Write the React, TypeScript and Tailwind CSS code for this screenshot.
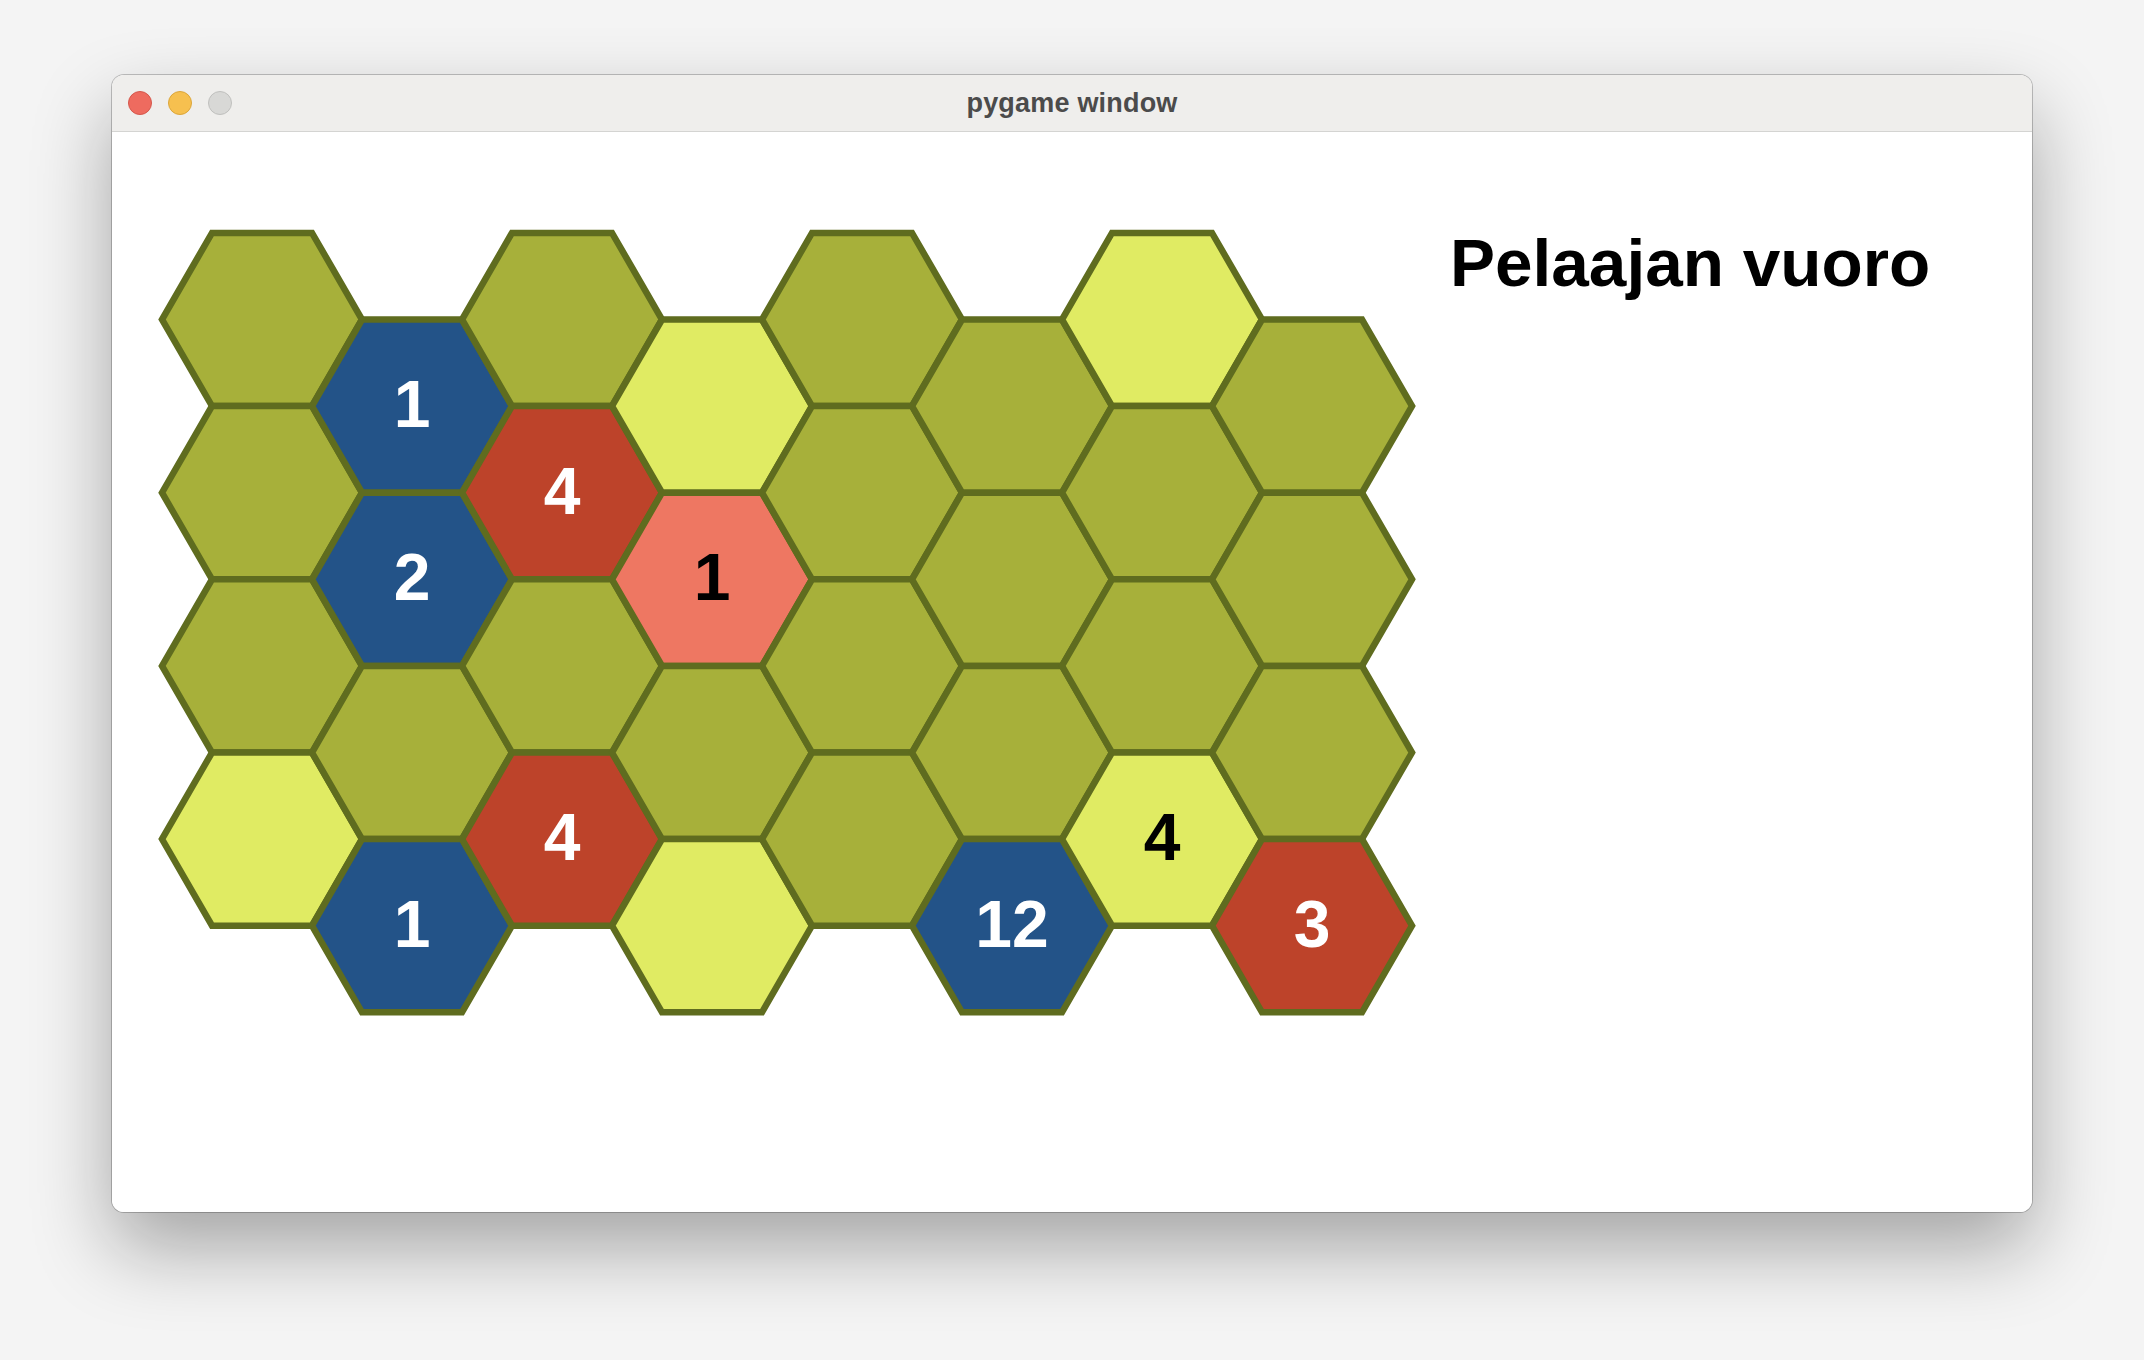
import React from "react";

const OLIVE = "#a7b03a";
const LIGHT = "#e0eb63";
const BLUE = "#235388";
const RED = "#bd432a";
const SALMON = "#ee7762";
const EDGE = "#5f6c1f";

type Cell = { fill: string; label?: string; dark?: boolean };

// board[col][row], odd columns are shifted down by half a hex
const board: Cell[][] = [
  [{ fill: OLIVE }, { fill: OLIVE }, { fill: OLIVE }, { fill: LIGHT }],
  [{ fill: BLUE, label: "1" }, { fill: BLUE, label: "2" }, { fill: OLIVE }, { fill: BLUE, label: "1" }],
  [{ fill: OLIVE }, { fill: RED, label: "4" }, { fill: OLIVE }, { fill: RED, label: "4" }],
  [{ fill: LIGHT }, { fill: SALMON, label: "1", dark: true }, { fill: OLIVE }, { fill: LIGHT }],
  [{ fill: OLIVE }, { fill: OLIVE }, { fill: OLIVE }, { fill: OLIVE }],
  [{ fill: OLIVE }, { fill: OLIVE }, { fill: OLIVE }, { fill: BLUE, label: "12" }],
  [{ fill: LIGHT }, { fill: OLIVE }, { fill: OLIVE }, { fill: LIGHT, label: "4", dark: true }],
  [{ fill: OLIVE }, { fill: OLIVE }, { fill: OLIVE }, { fill: RED, label: "3" }],
];

const R = 100;
const H = Math.sqrt(3) * R;

function hexPoints(cx: number, cy: number) {
  const pts: string[] = [];
  for (let i = 0; i < 6; i++) {
    const a = (Math.PI / 3) * i;
    pts.push(`${(cx + R * Math.cos(a)).toFixed(2)},${(cy + R * Math.sin(a)).toFixed(2)}`);
  }
  return pts.join(" ");
}

const Board = () => {
  const FS = 66;
  return (
    <svg width={1338} height={1080} viewBox="0 0 1338 1080" className="shrink-0">
      {board.map((col, c) =>
        col.map((cell, r) => {
          const cx = 150 + 150 * c;
          const cy = 187.5 + H * r + (c % 2 ? H / 2 : 0);
          return (
            <g key={`${c}-${r}`}>
              <polygon points={hexPoints(cx, cy)} fill={cell.fill} stroke={EDGE} strokeWidth={6.5} />
              {cell.label && (
                <text
                  x={cx}
                  y={cy + 0.358 * FS - 2.5}
                  textAnchor="middle"
                  fontFamily="'Liberation Sans', Arial, sans-serif"
                  fontWeight={700}
                  fontSize={FS}
                  fill={cell.dark ? "#000000" : "#ffffff"}
                >
                  {cell.label}
                </text>
              )}
            </g>
          );
        })
      )}
    </svg>
  );
};

export default function App() {
  return (
    <div className="w-[2144px] h-[1360px] bg-[#f4f4f4] pl-[112px] pt-[75px] font-['Liberation_Sans',Arial,sans-serif]">
      <div className="w-[1920px] rounded-[12px] overflow-hidden bg-white shadow-[0_0_0_1px_rgba(0,0,0,0.22),0_36px_80px_rgba(0,0,0,0.33)]">
        <div className="relative h-[57px] bg-[#efeeec] border-b border-[#d4d4d2] flex items-center justify-center">
          <div className="absolute left-[16px] top-[16px] flex gap-[16px]">
            <span className="w-[24px] h-[24px] rounded-full bg-[#ee6b5f] border border-[#d5574c]" />
            <span className="w-[24px] h-[24px] rounded-full bg-[#f6c04f] border border-[#dca63a]" />
            <span className="w-[24px] h-[24px] rounded-full bg-[#d8d8d6] border border-[#c0c0be]" />
          </div>
          <span className="text-[27px] font-bold text-[#4b4b4b] tracking-[0.2px]">pygame window</span>
        </div>
        <div className="h-[1080px] flex bg-white">
          <Board />
          <div className="mt-[97px] text-[67.5px] leading-none font-bold text-black whitespace-nowrap">
            Pelaajan vuoro
          </div>
        </div>
      </div>
    </div>
  );
}
